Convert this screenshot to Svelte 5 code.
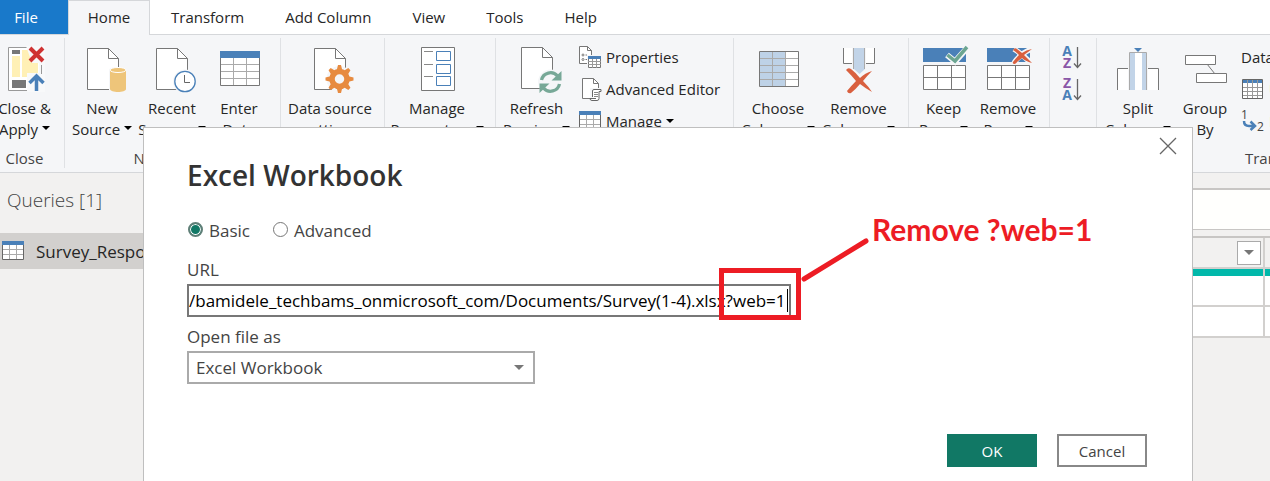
<script>
  const tabs = ['Transform', 'Add Column', 'View', 'Tools', 'Help'];

  const groups = [
    { w: 80, label: 'Close', items: [{ w: 79, icon: 'apply', a: 'Close &', b: 'Apply', drop: true }] },
    { w: 216, label: 'New Query', items: [
      { w: 74, icon: 'source', a: 'New', b: 'Source', drop: true },
      { w: 66, icon: 'recent', a: 'Recent', b: 'Sources', drop: true },
      { w: 68, icon: 'enter', a: 'Enter', b: 'Data' }
    ] },
    { w: 104, label: 'Data Sources', items: [{ w: 98, icon: 'settings', a: 'Data source', b: 'settings' }] },
    { w: 111, label: 'Parameters', items: [{ w: 104, icon: 'params', a: 'Manage', b: 'Parameters', drop: true }] },
    { w: 238, label: 'Query', items: [{ w: 81, icon: 'refresh', a: 'Refresh', b: 'Preview', drop: true }],
      list: [
        { icon: 'props', text: 'Properties' },
        { icon: 'editor', text: 'Advanced Editor' },
        { icon: 'table', text: 'Manage', drop: true }
      ] },
    { w: 175, label: 'Manage Columns', items: [
      { w: 88, icon: 'choose', a: 'Choose', b: 'Columns', drop: true },
      { w: 73, icon: 'removecols', a: 'Remove', b: 'Columns', drop: true }
    ] },
    { w: 141, label: 'Reduce Rows', items: [
      { w: 69, icon: 'keep', a: 'Keep', b: 'Rows', drop: true },
      { w: 60, icon: 'removerows', a: 'Remove', b: 'Rows', drop: true }
    ] },
    { w: 47, label: 'Sort', sort: true, items: [] },
    { w: 370, label: 'Transform', items: [
      { w: 82, icon: 'split', a: 'Split', b: 'Column', drop: true },
      { w: 52, icon: 'group', a: 'Group', b: 'By' }
    ],
      list: [
        { text: 'Data Type: Text', drop: true },
        { icon: 'firstrow', text: 'Use First Row as Headers', drop: true },
        { icon: 'replace', text: 'Replace Values' }
      ] }
  ];

  let mode = $state('basic');
  let url = $state('/bamidele_techbams_onmicrosoft_com/Documents/Survey(1-4).xlsx?web=1');

  function showEnd(node) {
    node.scrollLeft = node.scrollWidth;
  }
</script>

{#snippet page(x)}
  <g transform="translate({x} 0)" stroke="#777">
    <path d="M.5 2.5h21l10 10v31H.5z" fill="#fff" />
    <path d="M21.5 2.5v10h10" fill="none" />
  </g>
{/snippet}

{#snippet bigIcon(name)}
  <svg class="big" width="48" height="48" viewBox="0 0 48 48" fill="none" aria-hidden="true">
    {#if name === 'apply'}
      <path d="M7.500 1.500H41v43H7.500z" fill="#fff" stroke="#999" />
      <path d="M11 10h8v21h-8zM21 4h9l7 10v17H21z" fill="#fff0b5" />
      <path d="M11 4h8v4h-8zM11 34h14v8H11z" fill="#777" />
      <path d="M25 0h19v17H31zM26 27h18v19H26zM38 17h6v11h-6z" fill="#f8f9fa" />
      <path d="M40.500 19v9" stroke="#999" />
      <path d="M29 2l13 13M42 2L29 15" stroke="#cf3232" stroke-width="4" />
      <path d="M35.500 45V31M28.500 37l7-7 7 7" stroke="#4a80b8" stroke-width="3.500" />
    {:else if name === 'source'}
      {@render page(9)}
      <path d="M31 24c0-4 18-4 18 0v20c0 4-18 4-18 0z" fill="#f5f6f8" />
      <path d="M32 24v19c0 4 16 4 16 0V24z" fill="#eec57a" />
      <ellipse cx="40" cy="24" rx="8" ry="2.500" fill="#eec57a" stroke="#fff" />
    {:else if name === 'recent'}
      {@render page(8)}
      <circle cx="37" cy="35.500" r="12" fill="#f5f6f8" />
      <circle cx="37" cy="35.500" r="10.200" fill="#fff" stroke="#4a80b8" stroke-width="1.300" />
      <path d="M36.500 29v7.500H42" stroke="#666" />
    {:else if name === 'enter'}
      <path d="M5.500 6.500h39v33h-39z" fill="#fff" stroke="#777" />
      <path d="M6 18.500h38M6 25.500h38M6 32.500h38M18.500 12v27M31.500 12v27" stroke="#aaa" />
      <path d="M5 5h40v7H5z" fill="#4a80b8" />
    {:else if name === 'settings'}
      {@render page(8)}
      <circle cx="33.500" cy="33" r="13" fill="#f5f6f8" />
      <circle cx="33.500" cy="33" r="7.500" stroke="#e78b40" stroke-width="5.500" />
      <g fill="#e78b40">
        {#each [0, 45, 90, 135, 180, 225, 270, 315] as turn}
          <path d="M30.500 25l1.500-6h3l1.500 6z" transform="rotate({turn} 33.500 33)" />
        {/each}
      </g>
    {:else if name === 'params'}
      <path d="M8.500 1.500h33v43h-33z" fill="#fff" stroke="#777" />
      <path d="M11 5.500h9M11 18.500h9M11 30.500h9" stroke="#888" />
      <path d="M23.500 5.500h14v9h-14zM23.500 18.500h14v9h-14zM23.500 30.500h14v9h-14z" stroke="#4a80b8" />
    {:else if name === 'refresh'}
      <g transform="translate(0 -1)">{@render page(8)}</g>
      <circle cx="37.500" cy="36" r="12.500" fill="#f5f6f8" />
      <path d="M28.500 34a9.200 9.200 0 0 1 16-4M46.500 38a9.200 9.200 0 0 1-16 4" stroke="#77a897" stroke-width="3.300" />
      <path d="M48.500 25v9.500h-10zM26.500 47v-9.500h10z" fill="#77a897" />
    {:else if name === 'choose'}
      <path d="M5.500 5.500h39v35h-39z" fill="#fff" />
      <path d="M6 6h26v34H6z" fill="#bed2e7" />
      <path d="M6 12.500h38M6 19.500h38M6 26.500h38M6 33.500h38M18.500 6v34M31.500 6v34" stroke="#aaa" />
      <path d="M5.500 5.500h39v35h-39z" stroke="#777" />
    {:else if name === 'removecols'}
      <path d="M8.500 2v15.500h31V2" fill="#fff" stroke="#777" />
      <path d="M17 2h14v22l-7 6-7-6z" fill="#f5f6f8" />
      <path d="M19 2h11v21l-5.500 5L19 23z" fill="#c2d4e8" />
      <path d="M18.500 2v21M29.500 2v21" stroke="#aaa" />
      <path d="M11 24q2-3 5-1 4 3 9 9 5-5 12-7-5 5-9 10 6 6 9 11-7-4-12-8-5 6-9 9-3 1-4-2 5-6 9-10-4-5-10-11z" fill="#d9603f" />
    {:else if name === 'keep' || name === 'removerows'}
      <path d="M3 2h43v14H3z" fill="#4a80b8" />
      <path d="M3.500 19.500h42v24h-42z" fill="#fff" stroke="#777" />
      <path d="M3 31.500h43M17.500 20v24M31.500 20v24" stroke="#777" />
      {#if name === 'keep'}
        <path d="M27 9l8 6.500L48 1" stroke="#f5f6f8" stroke-width="6" />
        <path d="M27.500 9l7.500 6L47 1" stroke="#6ba591" stroke-width="3.500" />
      {:else}
        <path d="M30 3q8 5 16 13M47 3Q36 8 30 17" stroke="#f5f6f8" stroke-width="5.500" />
        <path d="M29 4q2-3 4-1l5 4q4-3 10-4-4 3-8 6 4 4 8 8-7-2-10-5-4 3-7 6-3 0-2-2 3-4 6-7-3-3-6-5z" fill="#d9603f" />
      {/if}
    {:else if name === 'split'}
      <path d="M3.500 44V22.500H14V44M34 44V22.500h10.500V44" fill="#fff" />
      <path d="M3.500 44V22.500H14M34 22.500h10.500V44" stroke="#777" />
      <path d="M16 7h17v37H16z" fill="#fff" />
      <path d="M16 7h5v37h-5zM28 7h5v37h-5z" fill="#c2d4e8" />
      <path d="M15.500 44V6.500h17V44" stroke="#aaa" />
      <path d="M20 2h8l-4 4z" fill="#4a80b8" />
    {:else if name === 'group'}
      <path d="M26 18l8 10" stroke="#777" />
      <path d="M4.500 9.500h30v9h-30zM15.500 27.500h30v9h-30z" fill="#fff" stroke="#777" />
    {/if}
  </svg>
{/snippet}

{#snippet smallIcon(name)}
  <svg class="small" width="24" height="24" viewBox="0 0 24 24" fill="none" aria-hidden="true">
    {#if name === 'props'}
      <path d="M1.500 1.500h8l4 4V18.500h-12z" fill="#fff" stroke="#777" />
      <path d="M9.500 1.500v4h4" stroke="#777" />
      <circle cx="5" cy="10" r="1" stroke="#777" /><circle cx="5" cy="14.500" r="1" stroke="#777" />
      <path d="M7.500 10h1.500M7.500 14.500h1.500" stroke="#777" />
      <path d="M9 10h15v14H9z" fill="#f5f6f8" />
      <path d="M10.500 12.500h12v10h-12z" fill="#fff" stroke="#777" />
      <path d="M10 16.500h13M10 19.500h13M14.500 14v9M18.500 14v9" stroke="#999" />
      <path d="M10 11h13v3H10z" fill="#4a80b8" />
    {:else if name === 'editor'}
      <path d="M4.500 1.500h11l5 5V21.500h-16z" fill="#fff" stroke="#777" />
      <path d="M15.500 1.500v5h5" stroke="#777" />
      <path d="M12 11h12v13H12z" fill="#f5f6f8" />
      <path d="M14.500 20v-6q0-1.500 1.500-1.500h7v2h-2v7q0 2-2 2h-5q-2 0-2-2h6" fill="#fff" stroke="#666" />
      <path d="M16 15.500h4M16 17.500h4M16 19.500h4" stroke="#888" />
    {:else if name === 'table'}
      <path d="M1.500 3.500h21v17h-21z" fill="#fff" stroke="#666" />
      <path d="M2 10.500h20M2 15.500h20M8.500 6v14M15.500 6v14" stroke="#aaa" />
      <path d="M1 2h22v4H1z" fill="#4a80b8" />
    {:else if name === 'firstrow'}
      <path d="M1.500 2.500h20v19h-20z" fill="#fff" />
      <path d="M2 3h19v3H2z" fill="#4a80b8" />
      <path d="M2 10.500h19M2 14.500h19M2 18.500h19M6.500 3v18M11.500 3v18M16.500 3v18" stroke="#999" />
      <path d="M1.500 2.500h20v19h-20z" stroke="#666" />
    {:else if name === 'replace'}
      <text x="0" y="10" font-size="12" fill="#444">1</text>
      <text x="16" y="22" font-size="12" fill="#444">2</text>
      <path d="M3 12q0 5 5 5h5M9.500 12.500l4.500 4.500-4.500 4" stroke="#4a80b8" stroke-width="2.500" />
    {/if}
  </svg>
{/snippet}

{#snippet sortIcon(first, second)}
  <svg width="24" height="24" viewBox="0 0 24 24" fill="none" aria-hidden="true">
    {#each [first, second] as letter, i}
      <text x="7" y={i ? 22 : 10} text-anchor="middle" font-size="14" font-weight="700" fill={letter === 'A' ? '#4a80b8' : '#8a57a8'}>{letter}</text>
    {/each}
    <path d="M17.500 1v20M14 17.500l3.500 4 3.500-4" stroke="#666" stroke-width="1.300" />
  </svg>
{/snippet}

<div class="app">
  <nav class="tabs">
    <button class="file">File</button>
    <button class="home">Home</button>
    {#each tabs as tab}<button>{tab}</button>{/each}
  </nav>

  <div class="ribbon">
    {#each groups as group}
      <section class="group" style="width:{group.w}px">
        <div class="tools">
          {#each group.items as item}
            <button class="tool" style="width:{item.w}px">
              {@render bigIcon(item.icon)}
              <span>{item.a}</span>
              <span>{item.b}{#if item.drop}<i class="caret"></i>{/if}</span>
            </button>
          {/each}
          {#if group.list}
            <div class="list" class:wide={group.label === 'Transform'}>
              {#each group.list as row}
                <button>
                  {#if row.icon}{@render smallIcon(row.icon)}{/if}{row.text}{#if row.drop}<i class="caret"></i>{/if}
                </button>
              {/each}
            </div>
          {/if}
          {#if group.sort}
            <div class="sort">
              <button aria-label="Sort ascending">{@render sortIcon('A', 'Z')}</button>
              <button aria-label="Sort descending">{@render sortIcon('Z', 'A')}</button>
            </div>
          {/if}
        </div>
        <div class="caption">{group.label}</div>
      </section>
    {/each}
  </div>

  <div class="body">
    <aside>
      <h2>Queries [1]</h2>
      <button class="query">{@render smallIcon('table')}Survey_Responses</button>
    </aside>
    <main>
      <input class="formula" aria-label="Formula" />
      <table>
        <colgroup><col /><col class="next" /></colgroup>
        <thead>
          <tr>
            <th><button class="filter" aria-label="Filter"><i class="caret"></i></button></th>
            <th></th>
          </tr>
        </thead>
        <tbody>
          <tr class="quality"><td></td><td></td></tr>
          <tr><td></td><td></td></tr>
          <tr><td></td><td></td></tr>
        </tbody>
      </table>
    </main>
  </div>

  <div class="dialog" role="dialog" aria-labelledby="title">
    <button class="close" aria-label="Close">
      <svg width="18" height="18" viewBox="0 0 18 18" fill="none"><path d="M1 1l16 16M17 1L1 17" stroke="#666" stroke-width="1.300" /></svg>
    </button>
    <h1 id="title">Excel Workbook</h1>
    <div class="modes">
      <label><input type="radio" value="basic" bind:group={mode} />Basic</label>
      <label><input type="radio" value="advanced" bind:group={mode} />Advanced</label>
    </div>
    <label class="name" for="url">URL</label>
    <div class="field">
      <input id="url" type="text" bind:value={url} use:showEnd />
      <span class="cursor"></span>
      <span class="mark"></span>
      <svg class="pointer" width="70" height="46" viewBox="0 0 70 46"><path d="M4 42L66 4" stroke="#ed1c24" stroke-width="5" stroke-linecap="round" /></svg>
      <strong class="note">Remove ?web=1</strong>
    </div>
    <label class="name" for="kind">Open file as</label>
    <div class="pick">
      <select id="kind"><option>Excel Workbook</option></select>
      <i class="caret"></i>
    </div>
    <footer>
      <button class="ok">OK</button>
      <button class="cancel">Cancel</button>
    </footer>
  </div>
</div>

<style>
  :global(body) { background: #f2f1f0; }
  * { box-sizing: border-box; }
  .app {
    position: relative;
    display: flex;
    flex-direction: column;
    min-height: 100vh;
    overflow: hidden;
    font: 15px/21px "Open Sans", "Noto Sans", sans-serif;
    color: #262626;
  }
  button, input, select { font: inherit; color: inherit; }
  button { padding: 0; border: 0; background: none; white-space: nowrap; }
  svg { display: block; flex: none; overflow: visible; }
  .caret {
    display: inline-block;
    flex: none;
    border: 4px solid transparent;
    border-top-color: #000;
    border-bottom: 0;
    margin-left: 4px;
    vertical-align: 5px;
  }

  .tabs { display: flex; height: 35px; background: #fff; border-bottom: 1px solid #d5d7da; }
  .tabs button { padding: 0 20px 0 21px; height: 34px; }
  .tabs .file { width: 68px; padding: 0 16px 0 0; background: #1979ca; color: #fff; }
  .tabs .home { width: 82px; height: 35px; padding: 0 0 2px; background: #f5f6f8; border: 1px solid #d5d7da; border-bottom: 0; }

  .ribbon { display: flex; height: 138px; background: #f5f6f8; border-bottom: 1px solid #d5d7da; }
  .group { display: flex; flex: none; flex-direction: column; margin: 3px 0 4px; border-right: 1px solid #dfe1e4; }
  .group:first-child { margin-left: -15px; }
  .tools { display: flex; flex: 1; padding-top: 8px; }
  .tool { display: flex; flex: none; flex-direction: column; align-items: center; justify-content: flex-start; }
  .big { margin-bottom: 4px; }
  .list { display: flex; flex-direction: column; margin-top: -5px; }
  .list button { display: flex; align-items: center; gap: 4px; height: 32px; padding-left: 1px; }
  .list .caret { margin-left: 0; }
  .list.wide { padding-left: 9px; }
  .sort { display: flex; flex-direction: column; gap: 8px; padding-left: 10px; }
  .caption { text-align: center; line-height: 19px; color: #444; }

  .body { display: flex; flex: 1; }
  aside { flex: none; width: 200px; padding-top: 14px; }
  h2 { margin: 0 0 19px 7px; font-size: 19px; line-height: 27px; font-weight: 300; color: #444; }
  .query { display: flex; align-items: center; gap: 11px; width: 100%; height: 36px; padding-left: 1px; background: #d2d0ce; font-size: 17px; }
  main { flex: 1; padding-top: 15px; overflow: hidden; }
  .formula { display: block; width: 100%; height: 42px; margin-bottom: 6px; border: solid #c8c6c4; border-width: 2px 0 1px; background: #fffffd; }
  table { width: calc(100% + 95px); table-layout: fixed; border-collapse: separate; border-spacing: 0; border-top: 2px solid #c8c6c4; }
  .next { width: 100px; }
  th, td { height: 31px; padding: 0; border-right: 2px solid #d2d0ce; border-bottom: 2px solid #d2d0ce; background: #fff; }
  th { background: #f2f1f0; padding-right: 2px; }
  .quality td { height: 7px; border-bottom: 0; background: #01b8aa; }
  .filter { display: flex; align-items: center; justify-content: center; width: 24px; height: 24px; margin-left: auto; background: #fff; border: 1px solid #aaa; }
  .filter .caret { margin: 0; border-width: 5px 5px 0; border-top-color: #777; }

  .dialog {
    position: absolute;
    inset: 127px 77px 0 143px;
    padding: 27px 43px;
    background: #fff;
    border: 1px solid #bfbfbf;
    border-bottom: 0;
    font-size: 17px;
    line-height: 24px;
    color: #444;
  }
  .close { position: absolute; top: 9px; right: 15px; }
  h1 { margin: 0 0 24px; font-size: 28px; line-height: 40px; font-weight: 600; color: #333; }
  .modes { display: flex; gap: 22px; height: 24px; margin-bottom: 14px; }
  .modes label { display: flex; gap: 6px; }
  .modes input { appearance: none; width: 15px; height: 15px; margin: 3px 0 0 1px; border: 1px solid #777; border-radius: 50%; background: #fff; }
  .modes input:checked { border: 2px solid #5f7f77; background: #117865; box-shadow: inset 0 0 0 1px #fff; }
  .name { display: block; padding-bottom: 2px; line-height: 25px; }
  .field { position: relative; width: 604px; max-width: 100%; height: 33px; margin-bottom: 7px; }
  .field input { width: 100%; height: 33px; padding: 0 1px 0 0; border: 2px solid #777; background: #fff; color: #000; }
  .cursor { position: absolute; right: 3px; top: 5px; width: 1px; height: 23px; background: #000; }
  .mark { position: absolute; right: -10px; top: -16px; width: 82px; height: 52px; border: 5px solid #ed1c24; }
  .pointer { position: absolute; left: 613px; top: -47px; }
  .note { position: absolute; left: 685px; top: -73px; font: 700 30px/36px Lato, sans-serif; color: #ed1c24; white-space: nowrap; }
  .pick { position: relative; width: 348px; max-width: 100%; }
  select { display: block; width: 100%; height: 33px; padding: 0 7px; appearance: none; border: 2px solid #aaa; border-radius: 0; background: #fff; }
  .pick .caret { position: absolute; right: 11px; top: 14px; border-width: 5px 5px 0; border-top-color: #777; }
  footer { display: flex; justify-content: flex-end; gap: 20px; margin-top: 50px; padding-right: 2px; }
  footer button { width: 90px; height: 33px; font-size: 15px; }
  .ok { background: #117865; color: #fff; }
  .cancel { border: 2px solid #888; }
</style>
